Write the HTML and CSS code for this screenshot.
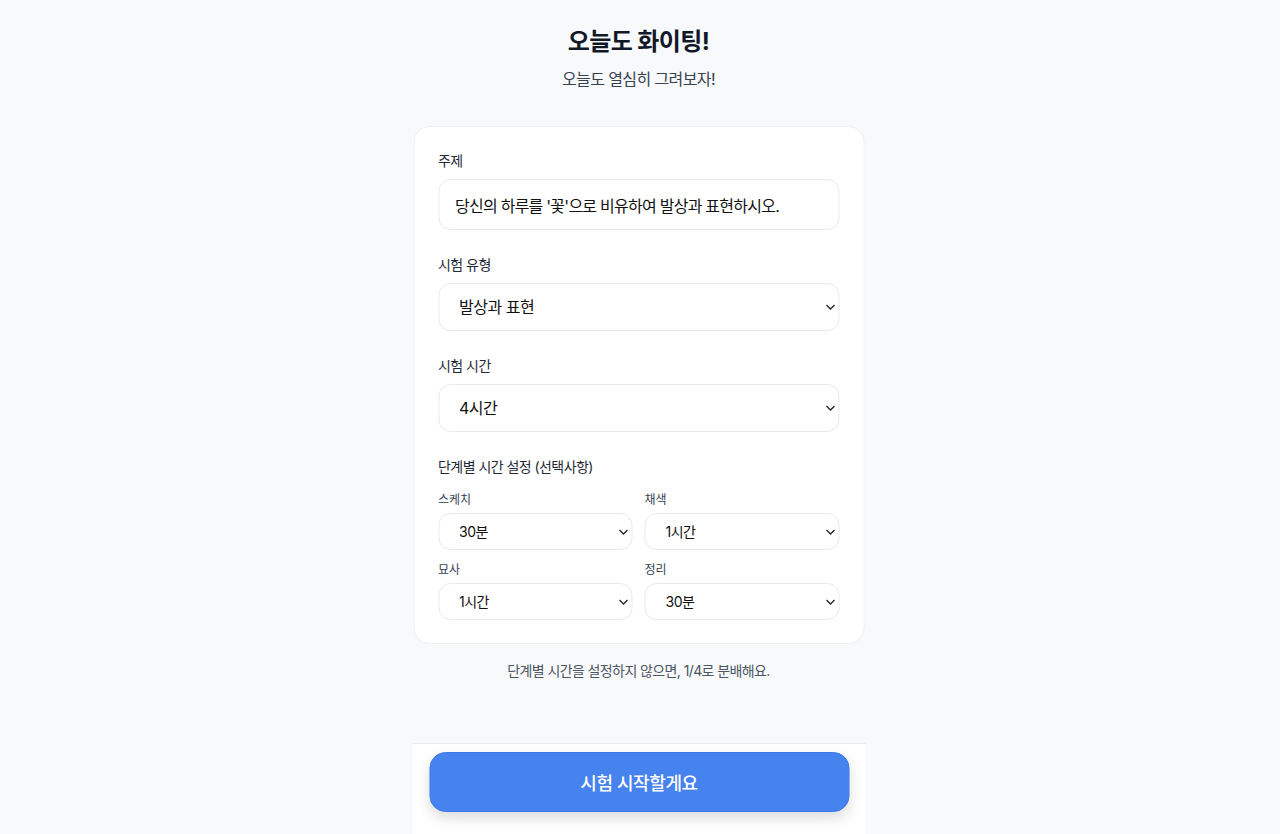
FILE: index.html
```html
<!DOCTYPE html>
<html lang="ko">
<head>
    <meta charset="UTF-8">
    <meta name="viewport" content="width=device-width, initial-scale=1.0">
    <title>오늘도 화이팅!</title>
    <link rel="stylesheet" href="styles.css">
</head>
<body>
    <div class="page">
        <header class="header">
            <h1>오늘도 화이팅!</h1>
            <p class="subtitle">오늘도 열심히 그려보자!</p>
        </header>

        <form class="card">
            <div class="field">
                <label class="label">주제</label>
                <input class="text-input" type="text" value="당신의 하루를 '꽃'으로 비유하여 발상과 표현하시오.">
            </div>

            <div class="field">
                <label class="label">시험 유형</label>
                <div class="select-wrap">
                    <select class="select">
                        <option>발상과 표현</option>
                        <option>기초 디자인</option>
                        <option>사고의 전환</option>
                    </select>
                    <svg class="chevron" width="10" height="6" viewBox="0 0 10 6"><path d="M1 1l4 4 4-4" fill="none" stroke="#222" stroke-width="1.3"/></svg>
                </div>
            </div>

            <div class="field">
                <label class="label">시험 시간</label>
                <div class="select-wrap">
                    <select class="select">
                        <option>4시간</option>
                        <option>3시간</option>
                        <option>5시간</option>
                    </select>
                    <svg class="chevron" width="10" height="6" viewBox="0 0 10 6"><path d="M1 1l4 4 4-4" fill="none" stroke="#222" stroke-width="1.3"/></svg>
                </div>
            </div>

            <div class="field">
                <label class="label">단계별 시간 설정 (선택사항)</label>
                <div class="steps">
                    <div class="step">
                        <label class="small-label">스케치</label>
                        <div class="select-wrap">
                            <select class="select small"><option>30분</option><option>1시간</option></select>
                            <svg class="chevron" width="10" height="6" viewBox="0 0 10 6"><path d="M1 1l4 4 4-4" fill="none" stroke="#222" stroke-width="1.3"/></svg>
                        </div>
                    </div>
                    <div class="step">
                        <label class="small-label">채색</label>
                        <div class="select-wrap">
                            <select class="select small"><option>1시간</option><option>30분</option></select>
                            <svg class="chevron" width="10" height="6" viewBox="0 0 10 6"><path d="M1 1l4 4 4-4" fill="none" stroke="#222" stroke-width="1.3"/></svg>
                        </div>
                    </div>
                    <div class="step">
                        <label class="small-label">묘사</label>
                        <div class="select-wrap">
                            <select class="select small"><option>1시간</option><option>30분</option></select>
                            <svg class="chevron" width="10" height="6" viewBox="0 0 10 6"><path d="M1 1l4 4 4-4" fill="none" stroke="#222" stroke-width="1.3"/></svg>
                        </div>
                    </div>
                    <div class="step">
                        <label class="small-label">정리</label>
                        <div class="select-wrap">
                            <select class="select small"><option>30분</option><option>1시간</option></select>
                            <svg class="chevron" width="10" height="6" viewBox="0 0 10 6"><path d="M1 1l4 4 4-4" fill="none" stroke="#222" stroke-width="1.3"/></svg>
                        </div>
                    </div>
                </div>
            </div>
        </form>

        <p class="note">단계별 시간을 설정하지 않으면, 1/4로 분배해요.</p>

        <div class="bottom-bar">
            <button class="start-btn" type="button">시험 시작할게요</button>
        </div>
    </div>
</body>
</html>
```

FILE: styles.css
```css
* {
    box-sizing: border-box;
}
body {
    margin: 0;
    background-color: #F8F9FB;
    font-family: Inter, "Noto Sans CJK KR", sans-serif;
    color: #111827;
}
.page {
    width: 453px;
    margin: 0 auto;
    min-height: 100vh;
    display: flex;
    flex-direction: column;
    align-items: center;
    transform: translateX(-1.5px);
}
.header {
    padding-top: 26px;
    text-align: center;
}
.header h1 {
    margin: 0;
    font-size: 24px;
    line-height: 32px;
    font-weight: 700;
    letter-spacing: -0.6px;
}
.subtitle {
    margin: 9px 0 0;
    font-size: 16px;
    line-height: 24px;
    color: #374151;
    letter-spacing: -0.6px;
}
.card {
    margin-top: 35px;
    width: 451px;
    background: white;
    border: 1px solid #EEF0F3;
    border-radius: 16px;
    padding: 23px 24px 23px;
    display: flex;
    flex-direction: column;
    gap: 24px;
}
.field {
    display: flex;
    flex-direction: column;
}
.label {
    font-size: 14px;
    line-height: 21px;
    color: #1F2937;
    margin-bottom: 8px;
    letter-spacing: -0.55px;
}
.text-input {
    height: 51px;
    width: 100%;
    border: 1.5px solid #E8EAEE;
    border-radius: 12px;
    padding: 0 16px;
    font-family: inherit;
    font-size: 16px;
    color: #111;
    letter-spacing: -0.75px;
    outline: none;
}
.select-wrap {
    position: relative;
}
.select {
    appearance: none;
    -webkit-appearance: none;
    width: 100%;
    height: 48px;
    border: 1.5px solid #E8EAEE;
    border-radius: 12px;
    background: white;
    padding: 0 20px;
    font-family: inherit;
    font-size: 16px;
    color: #111;
    letter-spacing: -0.5px;
    outline: none;
}
.select.small {
    height: 37px;
    font-size: 14px;
}
.chevron {
    position: absolute;
    right: 4px;
    top: 50%;
    margin-top: -3px;
    pointer-events: none;
}
.steps {
    display: grid;
    grid-template-columns: 1fr 1fr;
    column-gap: 12px;
    row-gap: 12px;
    margin-top: 7px;
}
.step {
    display: flex;
    flex-direction: column;
}
.small-label {
    font-size: 12px;
    line-height: 16px;
    color: #374151;
    margin-bottom: 5px;
}
.note {
    margin: 17px 0 0;
    font-size: 14px;
    line-height: 20px;
    color: #4B5563;
    letter-spacing: -0.6px;
}
.bottom-bar {
    margin-top: auto;
    width: 453px;
    background: white;
    border-top: 1px solid #E9EBEE;
    padding: 8px 16px 22px 17px;
}
.start-btn {
    width: 420px;
    height: 60px;
    background: #4683EE;
    border: 1px solid #3D7AE6;
    border-radius: 16px;
    color: white;
    font-family: inherit;
    font-size: 18px;
    font-weight: 500;
    letter-spacing: -0.4px;
    box-shadow: 0 6px 14px rgba(0, 0, 0, 0.14);
    cursor: pointer;
}
```
